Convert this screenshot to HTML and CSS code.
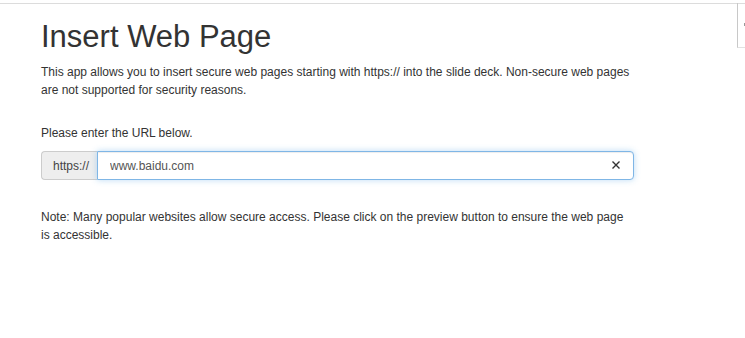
FILE: index.html
```html
<!DOCTYPE html>
<html lang="en">
<head>
    <meta charset="UTF-8">
    <meta name="viewport" content="width=device-width, initial-scale=1.0">
    <title>Insert Web Page</title>
    <link rel="stylesheet" href="styles.css">
</head>
<body>

    <div class="frame">
        <div class="side-tab"><span class="tick"></span></div>

        <div class="content">
            <h1>Insert Web Page</h1>
            <p class="intro">This app allows you to insert secure web pages starting with https:// into the slide deck. Non-secure web pages are not supported for security reasons.</p>

            <label for="url" class="url-label">Please enter the URL below.</label>
            <div class="input-group">
                <span class="addon">https://</span>
                <div class="field">
                    <input type="text" id="url" value="www.baidu.com">
                    <span class="clear">
                        <svg width="10" height="10" viewBox="0 0 10 10">
                            <path d="M1.5 1.5 L8.5 8.5 M8.5 1.5 L1.5 8.5" stroke="#333" stroke-width="1.4" fill="none"/>
                        </svg>
                    </span>
                </div>
            </div>

            <p class="note">Note: Many popular websites allow secure access. Please click on the preview button to ensure the web page is accessible.</p>
        </div>
    </div>

</body>
</html>
```

FILE: styles.css
```css
/* Base */
body {
    margin: 0;
    padding: 0;
    font-family: "Liberation Sans", Arial, sans-serif;
    font-size: 12px;
    color: #333;
    background-color: #fff;
}

/* Frame with the thin top line */
.frame {
    position: relative;
    margin-top: 3px;
    border-top: 1px solid #dcdcdc;
    height: 334px;
}

/* Little tab at the right edge */
.side-tab {
    position: absolute;
    top: -1px;
    left: 737px;
    width: 10px;
    height: 44px;
    border-left: 1px solid #c8c8c8;
    border-bottom: 1px solid #e2e2e2;
}

.side-tab .tick {
    position: absolute;
    top: 20px;
    left: 6px;
    width: 2px;
    height: 3px;
    background-color: #999;
}

/* Main column */
.content {
    padding-left: 41px;
    width: 593px;
}

h1 {
    margin: 16px 0 0;
    font-size: 31px;
    font-weight: normal;
    line-height: 34px;
    color: #333;
}

.intro {
    margin: 9px 0 0;
    line-height: 18px;
}

.url-label {
    display: block;
    margin-top: 25px;
    line-height: 18px;
}

/* URL input group */
.input-group {
    display: flex;
    margin-top: 9px;
    height: 29px;
}

.addon {
    display: flex;
    align-items: center;
    box-sizing: border-box;
    width: 56px;
    padding: 0 11px;
    background-color: #eee;
    border: 1px solid #ccc;
    border-right: none;
    border-radius: 4px 0 0 4px;
    color: #444;
}

.field {
    position: relative;
    flex: 1;
}

.field input {
    width: 100%;
    height: 100%;
    box-sizing: border-box;
    padding: 0 30px 0 12px;
    font-family: inherit;
    font-size: 12px;
    color: #555;
    border: 1px solid #7fb6e6;
    border-radius: 0 4px 4px 0;
    outline: none;
    box-shadow: inset 0 1px 1px rgba(0, 0, 0, 0.075), 0 0 6px rgba(102, 175, 233, 0.45);
}

.clear {
    position: absolute;
    right: 13px;
    top: 9px;
    width: 10px;
    height: 10px;
    display: flex;
}

.note {
    margin: 28px 0 0;
    line-height: 18px;
}
```
